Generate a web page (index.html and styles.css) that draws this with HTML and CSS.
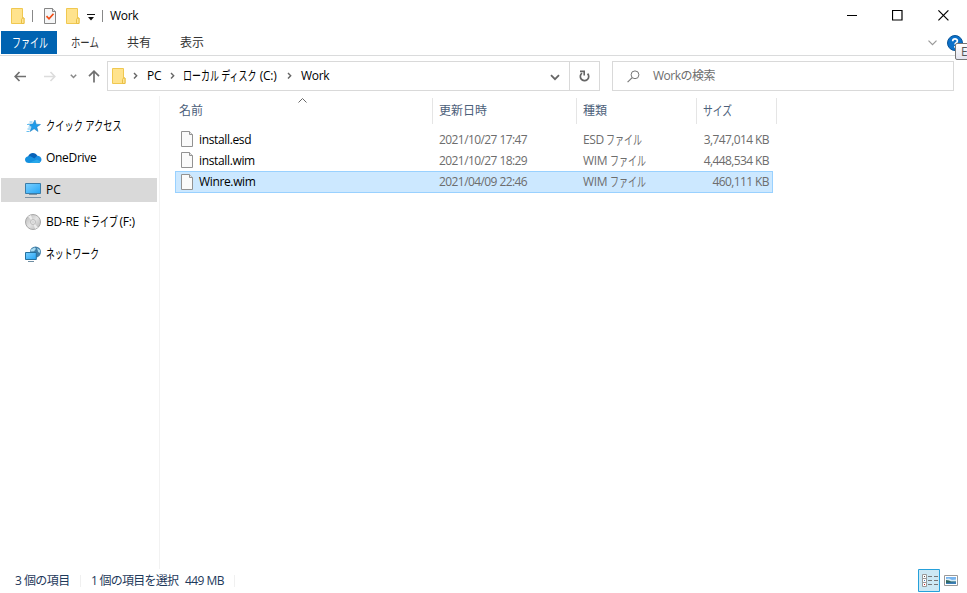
FILE: index.html
```
<!DOCTYPE html>
<html lang="ja">
<head>
<meta charset="UTF-8" />
<meta name="viewport" content="width=device-width, initial-scale=1" />
<title>Work</title>
<link rel="stylesheet" href="styles.css">
</head>
<body>

<!-- shared icons -->
<svg class="defs" width="0" height="0">
  <linearGradient id="screen" x1="0" y1="0" x2="1" y2="1">
    <stop offset="0" stop-color="#7bd0ff" />
    <stop offset="1" stop-color="#25a5f5" />
  </linearGradient>
  <linearGradient id="disc" x1="0" y1="0" x2="1" y2="1">
    <stop offset="0" stop-color="#b5b5b5" />
    <stop offset=".5" stop-color="#e4e4e4" />
    <stop offset="1" stop-color="#b0b0b0" />
  </linearGradient>
  <symbol id="folder" viewBox="0 0 14 16">
    <path d="M.5.5h11v9.5h1.5v5.5H.5z" fill="#ffe38d" stroke="#f0c850" />
    <path d="M10.5 15.5v-4l1-1.500h1.500v5.500z" fill="#ffe694" stroke="#e9bf45" />
  </symbol>
  <symbol id="file" viewBox="0 0 12 16">
    <path d="M.5.5h8l3 3v12H.5z" fill="#fafafa" stroke="#929292" />
    <path d="M8.500.5v3h3" fill="#e6e6e6" stroke="#929292" />
  </symbol>
  <symbol id="chevron" viewBox="0 0 5 8">
    <path d="M1 1l2.700 2.800L1 6.600" fill="none" stroke="#666" stroke-width="1.400" />
  </symbol>
</svg>

<div class="window">
  <header class="titlebar">
    <svg class="title-folder" width="14" height="16"><use href="#folder" /></svg>
    <span class="divider first"></span>
    <svg class="check" width="12" height="16" viewBox="0 0 12 16">
      <path d="M.5.500h8l3 3v12H.5z" fill="#f5f6f7" stroke="#858585" />
      <path d="M8.500.500v3h3" fill="#e6e6e6" stroke="#858585" />
      <path d="M2.500 8.200l2.500 2.600 4.500-5" fill="none" stroke="#f04d16" stroke-width="1.700" />
    </svg>
    <svg class="new-folder" width="14" height="16"><use href="#folder" /></svg>
    <svg class="customize" width="8" height="7" viewBox="0 0 8 7">
      <path d="M0 0h8v1H0zM1 3h6L4 6.500z" fill="#111" />
    </svg>
    <span class="divider second"></span>
    <span class="title">Work</span>
    <div class="controls">
      <svg width="11" height="11" viewBox="0 0 11 11"><path d="M1 5.500h10" stroke="#000" /></svg>
      <svg width="11" height="11" viewBox="0 0 11 11"><path d="M.5.5h9.500v9.500H.5z" fill="none" stroke="#000" stroke-width="1.200" /></svg>
      <svg width="11" height="11" viewBox="0 0 11 11"><path d="M.4.4l10 10M10.400.4l-10 10" stroke="#000" stroke-width="1.200" /></svg>
    </div>
  </header>

  <nav class="ribbon">
    <span class="tab active"><span class="kana file-word">ファイル</span></span>
    <span class="tab home"><span class="kana home-word">ホーム</span></span>
    <span class="tab share">共有</span>
    <span class="tab view">表示</span>
    <svg class="expand" width="9" height="6" viewBox="0 0 9 6"><path d="M.5.700l4 4 4-4" fill="none" stroke="#999" stroke-width="1.200" /></svg>
    <svg class="help" width="16" height="16" viewBox="0 0 16 16">
      <circle cx="8" cy="8" r="7.500" fill="#0b70c9" stroke="#075398" />
      <path d="M5.700 6.200c0-3 4.700-2.900 4.700-.2C10.400 7.800 8 7.700 8 9.600M8 11v1.700" fill="none" stroke="#fff" stroke-width="1.700" />
    </svg>
    <span class="tooltip">E</span>
  </nav>

  <div class="addressbar">
    <svg class="back" width="13" height="11" viewBox="0 0 13 11"><path d="M5.500 1L1.200 5.500l4.300 4.500M1.200 5.500H12" fill="none" stroke="#707070" stroke-width="1.700" /></svg>
    <svg class="forward" width="13" height="11" viewBox="0 0 13 11"><path d="M7.500 1l4.300 4.500L7.500 10M11.800 5.500H1" fill="none" stroke="#dcdcdc" stroke-width="1.600" /></svg>
    <svg class="recent" width="7" height="5" viewBox="0 0 7 5"><path d="M.8.8l2.700 2.700L6.200.8" fill="none" stroke="#888" stroke-width="1.500" /></svg>
    <svg class="up" width="12" height="13" viewBox="0 0 12 13"><path d="M1 6.200l5-5 5 5M6 1.200v11.300" fill="none" stroke="#707070" stroke-width="1.700" /></svg>
    <div class="path">
      <svg class="path-folder" width="14" height="16"><use href="#folder" /></svg>
      <svg class="sep s1" width="5" height="8"><use href="#chevron" /></svg>
      <span class="crumb c1">PC</span>
      <svg class="sep s2" width="5" height="8"><use href="#chevron" /></svg>
      <span class="crumb c2"><span class="kana disk-word">ローカル ディスク</span> (C:)</span>
      <svg class="sep s3" width="5" height="8"><use href="#chevron" /></svg>
      <span class="crumb c3">Work</span>
      <svg class="history" width="10" height="7" viewBox="0 0 10 7"><path d="M1 1.200l4 4 4-4" fill="none" stroke="#666" stroke-width="1.800" /></svg>
      <span class="refresh">
        <svg width="11" height="12" viewBox="0 0 11 12">
          <path d="M3 3.100A4.200 4.200 0 1 0 8.600 3.600" fill="none" stroke="#666" stroke-width="1.700" />
          <path d="M1 1.400h4.200v4" fill="none" stroke="#666" stroke-width="1.600" />
        </svg>
      </span>
    </div>
    <div class="search">
      <svg width="13" height="13" viewBox="0 0 13 13"><circle cx="8" cy="4.800" r="3.900" fill="none" stroke="#777" /><path d="M5.200 7.600L.6 12.200" stroke="#777" stroke-width="1.100" /></svg>
      <span>Workの検索</span>
    </div>
  </div>

  <main class="content">
    <aside class="sidebar">
      <div class="item">
        <svg width="17" height="16" viewBox="0 0 17 16">
          <path d="M10 2l1.200 4.200 4.300.3-3.700 2.400 1.200 4.600-3.900-2.700-4 2.700 1.500-4.600-3.100-2.700 4.300-.3z" fill="#1e9be9" stroke="#1679bd" stroke-width=".5" />
          <path d="M4.500 4h3M2 6.500h3M3.500 9h3M2.500 11h3M1.500 13.500h3" stroke="#67bff0" />
        </svg>
        <span class="kana quick-word">クイック アクセス</span>
      </div>
      <div class="item">
        <svg width="17" height="16" viewBox="0 0 17 16">
          <path d="M3 7C4 2.200 10.500 1.500 12.500 6L10 10 2 11z" fill="#0862b8" />
          <path d="M9 9l3-3.200c2.500 0 4.500 1.700 4.500 3.700 0 2.300-1.800 3.500-3.800 3.500H5z" fill="#1a8fe3" />
          <path d="M4 13C1.800 13 0 11.700 0 9.700c0-2.200 2-3.700 4.300-3.400 1.700 0 2.700.7 3.800 1.500l7.300 4C14.500 13 13.700 13 12.700 13z" fill="#1490df" />
          <path d="M4 13l8-3.400 3.600 2c-.7 1-1.700 1.400-2.900 1.400z" fill="#28a8ea" />
        </svg>
        <span class="onedrive">OneDrive</span>
      </div>
      <div class="item selected">
        <svg width="17" height="16" viewBox="0 0 17 16">
          <path d="M.5 1.500h15v10H.5z" fill="url(#screen)" stroke="#3a7ca8" />
          <path d="M4 12.500h8M0 15.500h16" stroke="#7e93a4" />
        </svg>
        <span>PC</span>
      </div>
      <div class="item">
        <svg width="17" height="16" viewBox="0 0 17 16">
          <circle cx="8" cy="8" r="7.500" fill="url(#disc)" stroke="#a8a8a8" />
          <path d="M8 8L3 2.500 6 1zM8 8l5 5.500-3 1.500z" fill="#f5f5f5" opacity=".8" />
          <circle cx="8" cy="8" r="2.500" fill="#eee" stroke="#bbb" />
          <circle cx="8" cy="8" r="1" fill="#fff" stroke="#aaa" stroke-width=".5" />
        </svg>
        <span class="drive">BD-RE <span class="kana drive-word">ドライブ</span> (F:)</span>
      </div>
      <div class="item">
        <svg width="17" height="16" viewBox="0 0 17 16">
          <circle cx="10.500" cy="6" r="5.500" fill="#427fa8" />
          <path d="M6 3.500l3.500-2 1.500 1.200-2 2.500-3.500.3zM12 2l3 2 .2 3-2-1z" fill="#a8dcf2" />
          <path d="M.5 6.500h10.800v7H.5z" fill="url(#screen)" stroke="#24719e" />
          <path d="M3 15.500h6" stroke="#6e8da2" />
        </svg>
        <span class="kana network-word">ネットワーク</span>
      </div>
    </aside>

    <section class="files">
      <div class="columns">
        <span class="col name">名前</span>
        <span class="col date">更新日時</span>
        <span class="col type">種類</span>
        <span class="col size"><span class="kana size-word">サイズ</span></span>
        <svg class="sort" width="9" height="5" viewBox="0 0 9 5"><path d="M.5 4.500l4-4 4 4" fill="none" stroke="#666" /></svg>
      </div>
      <div class="row">
        <span class="name"><svg width="12" height="16"><use href="#file" /></svg>install.esd</span>
        <span class="date">2021/10/27 17:47</span>
        <span class="type">ESD <span class="kana file-word">ファイル</span></span>
        <span class="size">3,747,014 KB</span>
      </div>
      <div class="row">
        <span class="name"><svg width="12" height="16"><use href="#file" /></svg>install.wim</span>
        <span class="date">2021/10/27 18:29</span>
        <span class="type">WIM <span class="kana file-word">ファイル</span></span>
        <span class="size">4,448,534 KB</span>
      </div>
      <div class="row selected">
        <span class="name"><svg width="12" height="16"><use href="#file" /></svg>Winre.wim</span>
        <span class="date">2021/04/09 22:46</span>
        <span class="type">WIM <span class="kana file-word">ファイル</span></span>
        <span class="size">460,111 KB</span>
      </div>
    </section>
  </main>

  <footer class="statusbar">
    <span class="count">3 個の項目</span>
    <span class="selection">1 個の項目を選択</span>
    <span class="total">449 MB</span>
    <div class="views">
      <svg width="22" height="23" viewBox="0 0 22 23">
        <path d="M.5.500h21v22H.5z" fill="#cce8f4" stroke="#26a0da" />
        <path d="M4.500 5.500h4v4h-4zM4.500 9.500h4v4h-4zM4.500 13.500h4v4h-4z" fill="#fff" stroke="#999" />
        <path d="M6 7h1v1H6z" fill="#555" /><path d="M6 11h1v1H6z" fill="#4a7ebb" /><path d="M6 15h1v1H6z" fill="#c22" />
        <path d="M10 7.500h4M16 7.500h4M10 11.500h4M16 11.500h4M10 15.500h4M16 15.500h4" stroke="#777" />
      </svg>
      <svg width="14" height="11" viewBox="0 0 14 11">
        <path d="M.5.500h13v10H.5z" fill="#fff" stroke="#999" />
        <path d="M2 2h10v7H2z" fill="#78b5ef" />
        <path d="M2 4l3-.5 3 1.500 4-.5v2H2z" fill="#d9edf7" />
        <path d="M2 5l3 .5 2 1h5V9H2z" fill="#31675f" />
        <path d="M2 8l4-.5 6-.5v2H2z" fill="#3c7fba" />
      </svg>
    </div>
  </footer>
</div>

</body>
</html>
```

FILE: styles.css
```
* {
  box-sizing: border-box;
}
body {
  margin: 0;
  background: #fff;
  color: #000;
  font-family: "Open Sans", "Noto Sans CJK JP", sans-serif;
  font-size: 12px;
  line-height: 18px;
}
svg {
  display: block;
  flex: none;
}
span {
  white-space: nowrap;
}
.defs {
  position: absolute;
}

/* condensed kana, the width is the one after scaling */
.kana {
  display: inline-block;
  font-size: 13px;
  line-height: 14px;
  letter-spacing: 0;
  transform: scaleX(.69);
  transform-origin: left;
}
.item > .kana {
  margin-top: -2px;
}
.file-word,
.drive-word {
  width: 35px;
}
.home-word {
  width: 28px;
  transform: scaleX(.72);
}
.disk-word {
  width: 74px;
  transform: scaleX(.69);
}
.quick-word {
  width: 76px;
  transform: scaleX(.71);
}
.network-word {
  width: 52px;
  transform: scaleX(.68);
}
.size-word {
  width: 29px;
  transform: scaleX(.75);
}
.window {
  display: flex;
  flex-direction: column;
  width: 967px;
  height: 593px;
  overflow: hidden;
}

/* title bar */
.titlebar {
  display: flex;
  align-items: center;
  height: 31px;
  padding-left: 11px;
}
.divider {
  width: 1px;
  height: 12px;
  background: #888;
}
.divider.first {
  margin: 0 11px 0 7px;
}
.new-folder {
  margin: 0 7px 0 10px;
}
.customize {
  margin-top: 3px;
}
.divider.second {
  margin: 0 7px 0 7px;
}
.title {
  letter-spacing: -.3px;
}
.controls {
  display: flex;
  gap: 35px;
  margin-left: auto;
  padding-right: 18px;
}

/* ribbon tabs */
.ribbon {
  position: relative;
  display: flex;
  height: 25px;
  border-bottom: 1px solid #dadbdc;
  line-height: 23px;
  color: #333;
}
.tab.active {
  width: 56px;
  height: 23px;
  margin-left: 1px;
  padding-left: 11px;
  background: #0063b1;
  color: #fff;
}
.tab.home {
  width: 56px;
  margin-left: 14px;
}
.tab.share {
  width: 53px;
}
.expand {
  margin: 9px 10px 0 auto;
}
.help {
  margin: 4px 4px 0 0;
}
.tooltip {
  position: absolute;
  left: 955px;
  top: 12px;
  width: 20px;
  height: 17px;
  padding-left: 5px;
  border: 1px solid #767676;
  border-radius: 2px;
  background: linear-gradient(#fff, #e4e5f0);
  color: #575757;
  line-height: 15px;
}

/* address and search */
.addressbar {
  display: flex;
  align-items: center;
  height: 40px;
  padding-left: 14px;
}
.forward {
  margin-left: 16px;
}
.recent {
  margin-left: 14px;
}
.up {
  margin-left: 11px;
}
.path {
  display: flex;
  align-items: center;
  width: 493px;
  height: 30px;
  margin-left: 7px;
  padding-left: 4px;
  border: 1px solid #d9d9d9;
}
.crumb {
  letter-spacing: -.3px;
}
.s1 {
  margin: 0 9px 0 7px;
}
.c1 {
  width: 23px;
}
.s2 {
  margin-right: 8px;
}
.c2 {
  width: 104px;
}
.s3 {
  margin-right: 9px;
}
.history {
  margin: 2px 9px 0 auto;
}
.refresh {
  display: flex;
  align-items: center;
  justify-content: center;
  width: 30px;
  height: 28px;
  border-left: 1px solid #d9d9d9;
}
.search {
  display: flex;
  align-items: center;
  width: 342px;
  height: 30px;
  margin-left: 12px;
  padding-left: 14px;
  border: 1px solid #d9d9d9;
  color: #6d6d6d;
  letter-spacing: -.5px;
}
.search span {
  margin-left: 13px;
}

/* navigation pane */
.content {
  display: flex;
  height: 473px;
}
.sidebar {
  width: 160px;
  padding: 18px 2px 0 1px;
  border-right: 1px solid #f2f2f2;
}
.item {
  display: flex;
  align-items: center;
  height: 24px;
  margin-bottom: 8px;
  padding-left: 24px;
}
.item svg {
  width: 17px;
  margin-right: 4px;
}
.item.selected {
  width: 156px;
  background: #d9d9d9;
}
.onedrive,
.drive {
  letter-spacing: -.3px;
}

/* file list */
.files {
  padding: 2px 0 0 15px;
}
.columns {
  position: relative;
  display: flex;
  height: 26px;
  margin-bottom: 5px;
  color: #4c607a;
}
.col {
  padding: 4px 0 0 6px;
  border-right: 1px solid #e5e5e5;
}
.columns .name {
  width: 258px;
  padding-left: 4px;
}
.columns .date {
  width: 144px;
}
.columns .type {
  width: 120px;
}
.columns .size {
  width: 80px;
}
.sort {
  position: absolute;
  left: 123px;
  top: 0;
}
.row {
  display: flex;
  align-items: center;
  width: 598px;
  height: 21px;
  color: #6d6d6d;
}
.row .name {
  display: flex;
  align-items: center;
  width: 264px;
  padding-left: 6px;
  color: #000;
  letter-spacing: -.35px;
}
.row .name svg {
  margin: -1px 6px 0 0;
}
.row .date {
  width: 144px;
  letter-spacing: -.58px;
}
.row .type {
  width: 110px;
  letter-spacing: -.4px;
}
.row .size {
  width: 76px;
  text-align: right;
  letter-spacing: -.6px;
}
.row.selected {
  height: 22px;
  background: #cce8ff;
  box-shadow: inset 0 0 0 1px #99d1ff;
}

/* status bar */
.statusbar {
  display: flex;
  align-items: center;
  height: 24px;
  padding-left: 15px;
  color: #1e395b;
  letter-spacing: -.55px;
}
.count {
  width: 66px;
  border-right: 1px solid #f0f0f0;
  line-height: 12px;
}
.selection {
  width: 94px;
  margin-left: 10px;
  letter-spacing: -.75px;
}
.total {
  width: 50px;
  border-right: 1px solid #f0f0f0;
  line-height: 12px;
}
.views {
  display: flex;
  align-items: center;
  gap: 4px;
  margin: -1px 0 0 auto;
  padding-right: 9px;
}
```
